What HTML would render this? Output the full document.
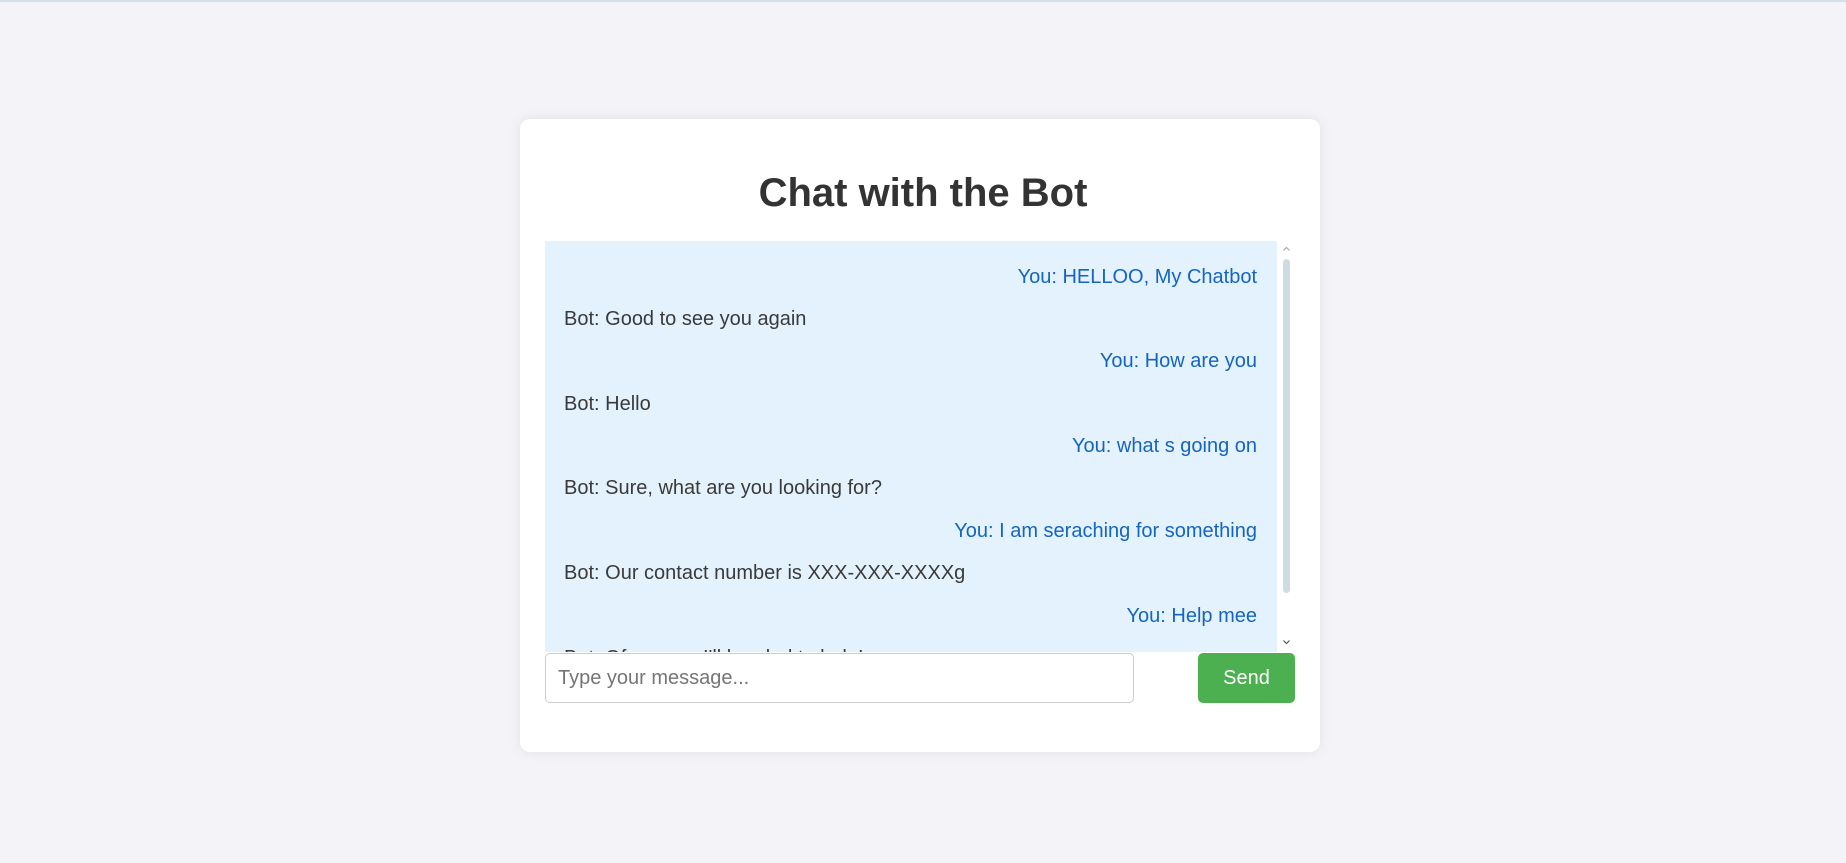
<!DOCTYPE html>
<html><head><meta charset="utf-8"><style>
html,body{margin:0;padding:0;}
body{width:1846px;height:863px;background:#f3f3f8;font-family:"Liberation Sans",Arial,sans-serif;position:relative;overflow:hidden;}
.top{position:absolute;left:0;top:0;width:1846px;height:2px;background:#d3e0ec;}
.card{position:absolute;left:520px;top:119px;width:800px;height:633px;background:#fff;border-radius:10px;box-shadow:0 0 12px rgba(0,0,0,0.08);}
h1{position:absolute;left:0;right:0;top:171px;margin:0;text-align:center;font-size:40px;font-weight:bold;color:#333;line-height:44px;}
.chat{position:absolute;left:545px;top:241px;width:732px;height:411px;background:#e3f2fd;overflow:hidden;}
.inner{padding-top:14.5px;}
.m{height:42.4px;line-height:42.4px;font-size:20px;padding:0 20px 0 19px;white-space:nowrap;}
.u{text-align:right;color:#1565c0;}
.b{color:#3a3a3a;}
.sb{position:absolute;left:1277px;top:241px;width:18px;height:411px;background:#fff;}
.thumb{position:absolute;left:1283px;top:259px;width:7px;height:334px;background:#cfdbe3;border-radius:4px;}
.inp{position:absolute;left:545px;top:653px;width:589px;height:50px;box-sizing:border-box;border:1px solid #ccc;border-radius:5px;background:#fff;font-size:20px;color:#757575;line-height:48px;padding-left:12px;}
.btn{position:absolute;left:1198px;top:653px;width:97px;height:50px;background:#4caf50;border-radius:5px;color:#fff;font-size:20px;line-height:50px;text-align:center;}
</style></head><body>
<div class="top"></div>
<div class="card"></div>
<h1>Chat with the Bot</h1>
<div class="chat"><div class="inner">
<div class="m u">You: HELLOO, My Chatbot</div>
<div class="m b">Bot: Good to see you again</div>
<div class="m u">You: How are you</div>
<div class="m b">Bot: Hello</div>
<div class="m u">You: what s going on</div>
<div class="m b">Bot: Sure, what are you looking for?</div>
<div class="m u">You: I am seraching for something</div>
<div class="m b">Bot: Our contact number is XXX-XXX-XXXXg</div>
<div class="m u">You: Help mee</div>
<div class="m b">Bot: Of course, I'll be glad to help!</div>
</div></div>
<div class="sb"></div>
<div class="thumb"></div>
<svg style="position:absolute;left:1282px;top:246px" width="9" height="6"><path d="M1.5 4.5 L4.5 1.5 L7.5 4.5" stroke="#aaa" stroke-width="1.2" fill="none"/></svg>
<svg style="position:absolute;left:1282px;top:639px" width="9" height="6"><path d="M1.5 1.5 L4.5 4.5 L7.5 1.5" stroke="#555" stroke-width="1.2" fill="none"/></svg>
<div class="inp">Type your message...</div>
<div class="btn">Send</div>
</body></html>
